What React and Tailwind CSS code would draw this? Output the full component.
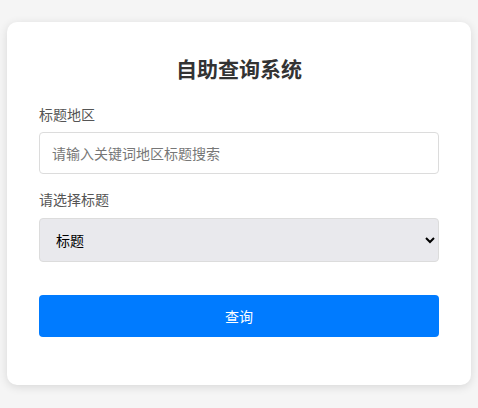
import React from "react";

const font = { fontFamily: '"Noto Sans", "Noto Sans CJK SC", sans-serif' };

export default function App() {
  return (
    <div className="min-h-[408px] w-full bg-[#f5f5f5] pt-[22px]" style={font}>
      <div className="mx-auto w-[464px] rounded-[10px] bg-white px-8 pt-8 pb-12 shadow-[0_2px_10px_rgba(0,0,0,0.12)]">
        <h1 className="text-center text-[21px] leading-[30px] font-bold text-[#333]">自助查询系统</h1>

        <div className="mt-[20px]">
          <label className="block text-[14px] leading-[22px] text-[#555]">标题地区</label>
          <input
            type="text"
            placeholder="请输入关键词地区标题搜索"
            className="mt-[6px] h-[42px] w-full rounded-[4px] border border-[#dcdcdc] px-3 text-[14px] text-[#333] outline-none placeholder:text-[#777]"
          />
        </div>

        <div className="mt-[15px]">
          <label className="block text-[14px] leading-[22px] text-[#555]">请选择标题</label>
          <select className="mt-[7px] h-[44px] w-full rounded-[4px] border border-[#dcdcdc] bg-[#e9e9ed] px-3 text-[14px] font-normal text-black">
            <option>标题</option>
          </select>
        </div>

        <button className="mt-[33px] h-[42px] w-full rounded-[4px] bg-[#007bff] text-[14px] text-white">
          查询
        </button>
      </div>
    </div>
  );
}
